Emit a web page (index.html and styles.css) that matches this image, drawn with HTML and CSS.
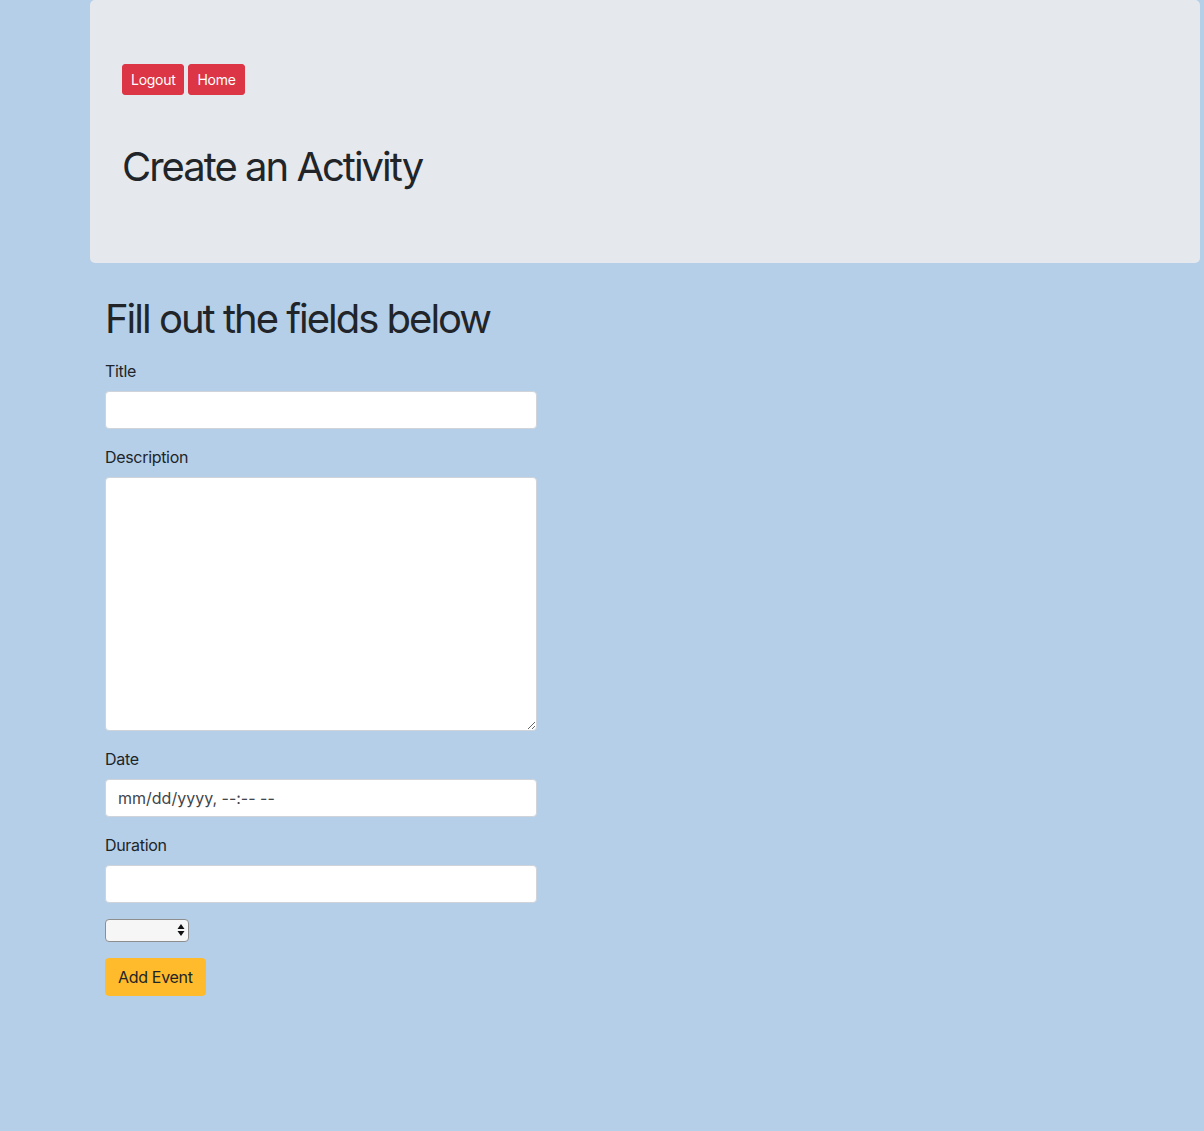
FILE: index.html
```html
<!DOCTYPE html>
<html lang="en">
<head>
<meta charset="utf-8">
<title>Create an Activity</title>
<link rel="stylesheet" href="styles.css">
</head>
<body>
<header class="jumbotron">
  <div class="nav-buttons">
    <button class="btn btn-sm btn-danger">Logout</button>
    <button class="btn btn-sm btn-danger">Home</button>
  </div>
  <h1 class="display-title">Create an Activity</h1>
</header>
<main class="container">
  <h1 class="form-heading">Fill out the fields below</h1>
  <form class="activity-form">
    <div class="form-group">
      <label for="title">Title</label>
      <input id="title" class="form-control" type="text">
    </div>
    <div class="form-group">
      <label for="description">Description</label>
      <textarea id="description" class="form-control textarea"></textarea>
    </div>
    <div class="form-group">
      <label for="date">Date</label>
      <input id="date" class="form-control date-control" type="text" value="mm/dd/yyyy, --:-- --">
    </div>
    <div class="form-group">
      <label for="duration">Duration</label>
      <input id="duration" class="form-control" type="text">
    </div>
    <div class="form-group">
      <div class="select-wrap">
        <select class="small-select" aria-label="Type"><option></option></select>
        <svg class="select-arrows" width="8" height="14" viewBox="0 0 8 14"><path d="M4 1 L7.5 6 L0.5 6 Z M4 13 L7.5 8 L0.5 8 Z" fill="#111"/></svg>
      </div>
    </div>
    <button type="button" class="btn btn-warning">Add Event</button>
  </form>
</main>
</body>
</html>
```

FILE: styles.css
```css
* { box-sizing: border-box; }

html, body {
  margin: 0;
  padding: 0;
}

body {
  background: #b5cfe8;
  font-family: Inter, "Noto Sans", "Liberation Sans", sans-serif;
  font-size: 16px;
  line-height: 1.5;
  color: #212529;
  letter-spacing: -0.02em;
  min-height: 1131px;
}

.jumbotron {
  margin: 0 4px 32px 90px;
  background: #e5e9ed;
  border-radius: 5px;
  padding: 64px 32px;
}

.nav-buttons {
  display: flex;
  gap: 4px;
}

.btn {
  font-family: inherit;
  letter-spacing: -0.02em;
  border: 1px solid transparent;
  border-radius: 4px;
  cursor: pointer;
  font-size: 16px;
  line-height: 24px;
  padding: 6px 12px;
}

.btn-sm {
  font-size: 14px;
  line-height: 21px;
  padding: 4px 8px;
  border-radius: 3px;
}

.btn-danger {
  background: #dc3545;
  border-color: #dc3545;
  color: #fff;
}

.btn-warning {
  background: #ffbb2b;
  border-color: #ffbb2b;
  color: #212529;
}

.display-title {
  margin: 48px 0 8px;
  font-size: 40px;
  font-weight: 400;
  line-height: 48px;
  letter-spacing: -0.05em;
}

.container {
  padding: 0 15px;
  margin-left: 90px;
}

.form-heading {
  margin: 0 0 16px;
  font-size: 40px;
  font-weight: 400;
  line-height: 48px;
  letter-spacing: -0.05em;
}

.activity-form {
  width: 432px;
}

.form-group {
  margin-bottom: 16px;
}

.form-group label {
  display: block;
  margin-bottom: 8px;
  line-height: 24px;
}

.form-control {
  display: block;
  width: 100%;
  height: 38px;
  padding: 6px 12px;
  font-family: inherit;
  font-size: 16px;
  line-height: 24px;
  letter-spacing: -0.01em;
  color: #495057;
  background: #fff;
  border: 1px solid #ced4da;
  border-radius: 4px;
}

.date-control {
  letter-spacing: 0;
  color: #3f454b;
}

.textarea {
  height: 254px;
  resize: both;
}

.select-wrap {
  position: relative;
  width: 84px;
  height: 23px;
}

.small-select {
  appearance: none;
  -webkit-appearance: none;
  width: 84px;
  height: 23px;
  background: #f6f6f6;
  border: 1px solid #8e8e8e;
  border-radius: 4px;
  font-family: inherit;
  font-size: 13px;
  display: block;
}

.select-arrows {
  position: absolute;
  right: 4px;
  top: 4px;
  pointer-events: none;
}
```
